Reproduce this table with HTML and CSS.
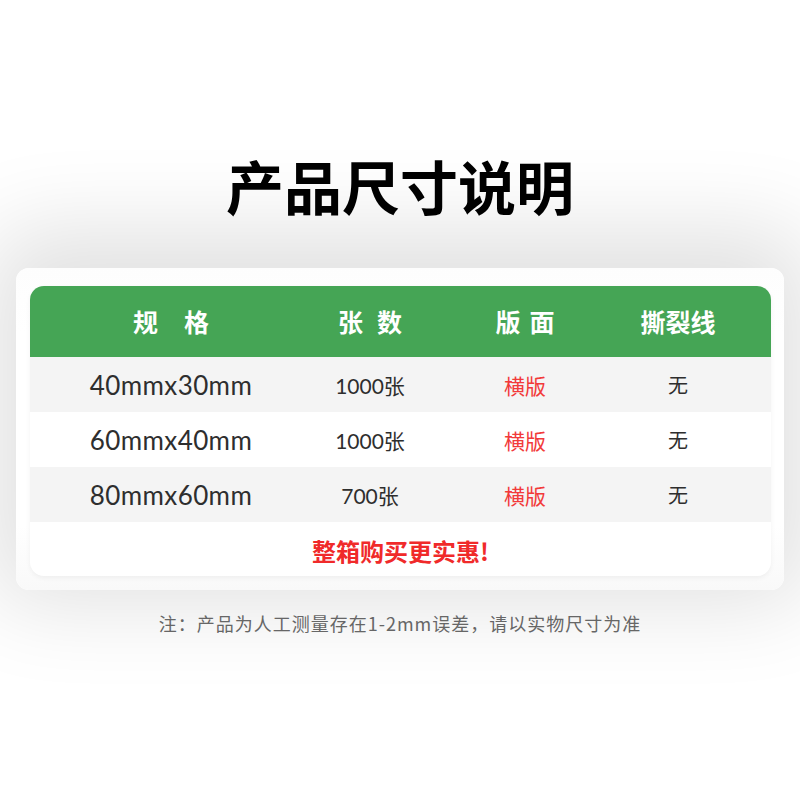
FILE: index.html
```html
<!DOCTYPE html>
<html lang="zh">
<head>
<meta charset="utf-8">
<link rel="stylesheet" href="styles.css">
</head>
<body>
<main class="page">
  <h1 class="title">产品尺寸说明</h1>
  <section class="card">
    <div class="table">
      <div class="row head">
        <div class="cell c1">规<span class="gap-l">格</span></div>
        <div class="cell c2">张<span class="gap-m">数</span></div>
        <div class="cell c3">版<span class="gap-s">面</span></div>
        <div class="cell c4">撕裂线</div>
      </div>
      <div class="row gray">
        <div class="cell c1 size">40mmx30mm</div>
        <div class="cell c2 qty">1000张</div>
        <div class="cell c3 red">横版</div>
        <div class="cell c4 tear">无</div>
      </div>
      <div class="row">
        <div class="cell c1 size">60mmx40mm</div>
        <div class="cell c2 qty">1000张</div>
        <div class="cell c3 red">横版</div>
        <div class="cell c4 tear">无</div>
      </div>
      <div class="row gray">
        <div class="cell c1 size">80mmx60mm</div>
        <div class="cell c2 qty">700张</div>
        <div class="cell c3 red">横版</div>
        <div class="cell c4 tear">无</div>
      </div>
      <div class="promo">整箱购买更实惠!</div>
    </div>
  </section>
  <p class="note">注：产品为人工测量存在1-2mm误差，请以实物尺寸为准</p>
</main>
</body>
</html>
```

FILE: styles.css
```css
html, body {
  margin: 0;
  padding: 0;
  background: #ffffff;
}
body {
  width: 800px;
  height: 800px;
  overflow: hidden;
  font-family: "Noto Sans CJK SC", "Noto Sans", sans-serif;
}
.page {
  display: flex;
  flex-direction: column;
  align-items: stretch;
  padding-top: 152px;
}
.title {
  margin: 0;
  text-align: center;
  font-size: 58px;
  line-height: 66px;
  font-weight: 700;
  color: #000;
}
.card {
  margin: 50px 16px 0 16px;
  height: 322px;
  box-sizing: border-box;
  padding: 18px 13px 14px 14px;
  background: linear-gradient(#fdfdfd, #ffffff 20%, #ffffff 80%, #f9f9f9);
  border-radius: 13px;
  box-shadow: 0 -12px 90px 26px rgba(0, 0, 0, 0.12);
}
.table {
  height: 100%;
  border-radius: 14px;
  overflow: hidden;
  background: #ffffff;
  display: flex;
  flex-direction: column;
  box-shadow: 0 2px 5px rgba(0, 0, 0, 0.05);
}
.row {
  display: grid;
  grid-template-columns: 282px 116px 194px 112px;
  height: 55px;
  align-items: center;
  background: #ffffff;
}
.row.gray {
  background: #f4f4f4;
}
.row.head {
  height: 71px;
  background: #45a555;
}
.cell {
  text-align: center;
  white-space: nowrap;
}
.head .cell {
  color: #ffffff;
  font-size: 25px;
  font-weight: 700;
  padding-bottom: 2px;
}
.gap-l { margin-left: 26px; }
.gap-m { margin-left: 14px; }
.gap-s { margin-left: 9px; }
.size {
  font-family: "Lato", "Noto Sans CJK SC", sans-serif;
  font-size: 26px;
  letter-spacing: 0.4px;
  color: #2e2e2e;
}
.qty {
  font-family: "Lato", "Noto Sans CJK SC", sans-serif;
  font-size: 21px;
  color: #2e2e2e;
}
.red {
  font-size: 21px;
  color: #f23a3a;
}
.tear {
  font-size: 20px;
  color: #2e2e2e;
}
.promo {
  flex: 1;
  display: flex;
  align-items: center;
  justify-content: center;
  color: #f02a2a;
  font-size: 24px;
  font-weight: 700;
  padding-top: 2px;
}
.note {
  margin: 20px 0 0 0;
  text-align: center;
  color: #666666;
  font-size: 18px;
  letter-spacing: 1px;
  line-height: 26px;
}
```
